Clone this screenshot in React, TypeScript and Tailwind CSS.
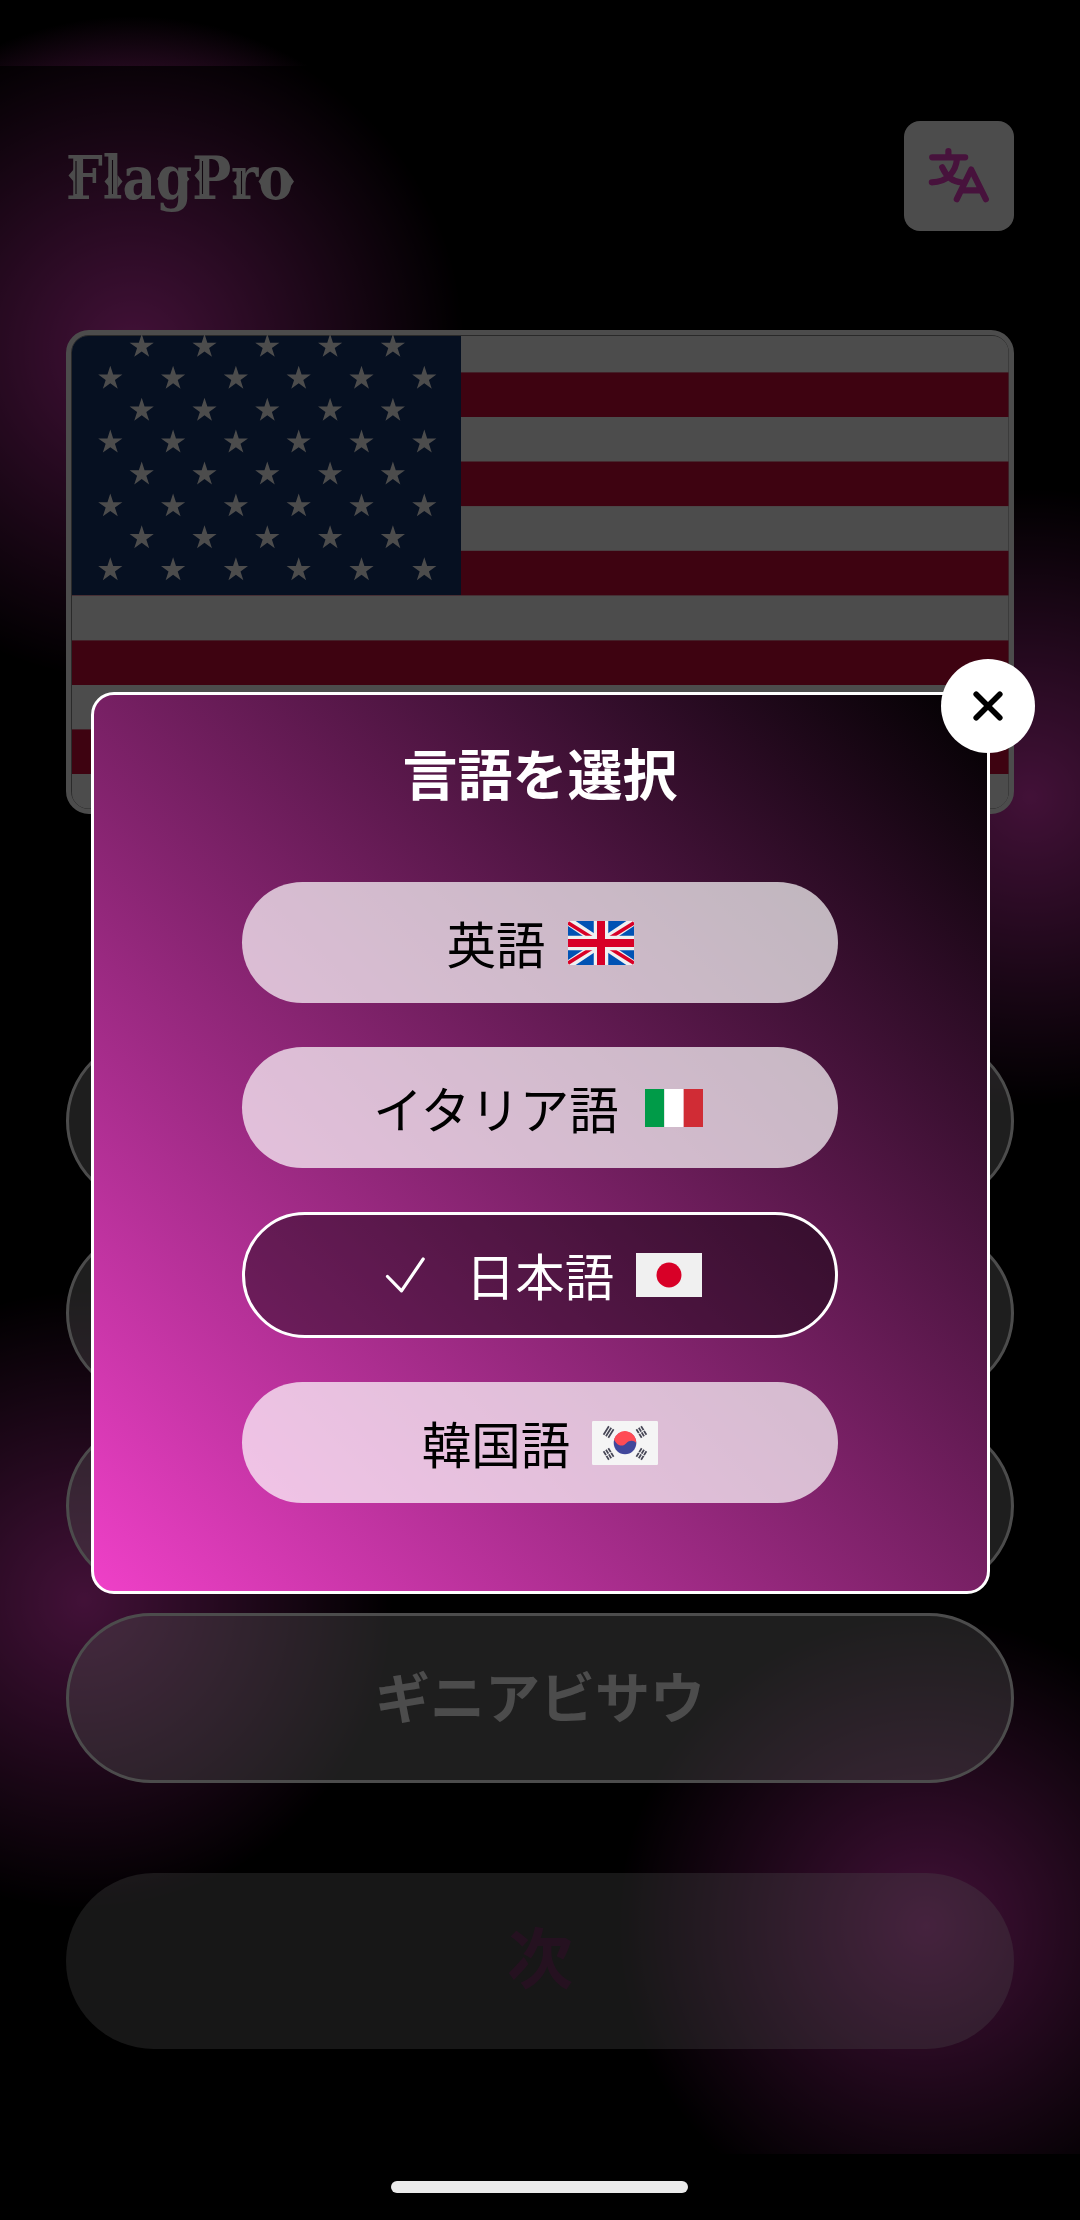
import React from "react";

const jp = "font-['Noto_Sans_CJK_JP',sans-serif]";

function starPoints(cx: number, cy: number, r: number) {
  return Array.from({ length: 10 }, (_, i) => {
    const a = -Math.PI / 2 + (i * Math.PI) / 5;
    const d = i % 2 ? r * 0.382 : r;
    return `${(cx + d * Math.cos(a)).toFixed(2)},${(cy + d * Math.sin(a)).toFixed(2)}`;
  }).join(" ");
}

function UsaFlag() {
  const stars: string[] = [];
  for (let row = 0; row < 8; row++) {
    const inset = row % 2 === 0;
    for (let i = 0; i < (inset ? 5 : 6); i++) {
      stars.push(starPoints((inset ? 141.7 : 110.3) + i * 62.8, 346.6 + row * 31.9, 12.7));
    }
  }
  return (
    <svg viewBox="71 335 938 474" className="block h-full w-full">
      <rect x="71" y="335" width="938" height="474" fill="#8c8c8c" />
      <rect x="72" y="336" width="936.5" height="472.5" rx="16" fill="#fff" />
      {[372.4, 461.5, 550.8, 640.4, 729.4].map((y) => (
        <rect key={y} x="72" y={y} width="936.5" height="44.6" fill="#cf0d3a" />
      ))}
      <path d="M461 336H88a16 16 0 0 0-16 16v243h389z" fill="#16366f" />
      {stars.map((p) => (
        <polygon key={p} points={p} fill="#fff" />
      ))}
    </svg>
  );
}

/* Small western-style spurs and engraved lines laid over the wordmark. */
function LogoOrnaments() {
  return (
    <svg viewBox="66 121 230 110" className="pointer-events-none absolute top-0 left-0 h-[110px] w-[230px]">
      <path
        d="M74 169l-5.500 6.500 5.500 6.500zM110 175l-5.500 6.500 5.500 6.500zM117.500 175l5 6.500-5 6.500zM200 169l-5.500 6.500 5.500 6.500zM239 175l-5.500 6.500 5.500 6.500zM263 175l-4.500 6.500 4.500 6.500zM289.500 175l4.500 6.500-4.500 6.500zM161 174l-4 5 4 5zM185 174l4.500 5-4.500 5z"
        fill="#fff"
      />
      <path d="M76 161v33M112.500 160v34M202.500 161v33M241.500 171v23" stroke="#3a1a34" strokeWidth="1.100" />
    </svg>
  );
}

function TranslateIcon() {
  return (
    <svg
      viewBox="904 121 110 110"
      className="h-[110px] w-[110px]"
      fill="none"
      stroke="#ee3ec8"
      strokeWidth="6.2"
      strokeLinecap="round"
      strokeLinejoin="round"
    >
      <path d="M932.2 157.3h33M948.4 151.2v6M957 159c-1.200 12-9 23-25.200 23.300M942.200 167.300c3.500 8 10 14.500 19.500 15.200" />
      <path d="M956.800 199.200L971.200 169.500l14.600 29.700M962 190.300h19" />
    </svg>
  );
}

function UkFlag() {
  return (
    <svg viewBox="0 0 66 44" className="h-[44px] w-[66px]">
      <rect width="66" height="44" fill="#0052b4" />
      <path d="M0 0L66 44M66 0L0 44" stroke="#f0f0f0" strokeWidth="8.500" />
      <path d="M0 1.800L26 18M66 1.800L40 18M0 42.200L26 26M66 42.200L40 26" stroke="#d80027" strokeWidth="3.600" />
      <path d="M33 0v44M0 22h66" stroke="#f0f0f0" strokeWidth="14.500" />
      <path d="M33 0v44M0 22h66" stroke="#d80027" strokeWidth="8" />
    </svg>
  );
}

function ItalyFlag() {
  return (
    <svg viewBox="0 0 66 44" className="h-[44px] w-[66px]">
      <path d="M4 3h19.300v38H4z" fill="#009b48" />
      <path d="M23.300 3h19.400v38H23.300z" fill="#fff" />
      <path d="M42.700 3H62v38H42.700z" fill="#d02c35" />
    </svg>
  );
}

function JapanFlag() {
  return (
    <svg viewBox="0 0 66 44" className="h-[44px] w-[66px]">
      <rect width="66" height="44" fill="#f0f0f0" />
      <circle cx="33" cy="22" r="12.500" fill="#d80027" />
    </svg>
  );
}

function KoreaFlag() {
  const trigram = (x: number, y: number, angle: number, broken: boolean) => (
    <g key={`${x}-${y}`} transform={`translate(${x} ${y}) rotate(${angle})`}>
      <path d="M-5 -2.800h10M-5 0h10M-5 2.800h10" stroke="#464655" strokeWidth="1.700" />
      {broken && <path d="M0 -4v8" stroke="#f5f5f5" strokeWidth="0.900" />}
    </g>
  );
  return (
    <svg viewBox="0 0 66 44" className="h-[44px] w-[66px]">
      <rect width="66" height="44" rx="1.200" fill="#f5f5f5" />
      <circle cx="33" cy="22" r="11.300" fill="#41479b" />
      <path d="M22 18.600A11.300 11.300 0 0 1 44.200 22.500C43.500 19.500 37.500 18.500 34.500 22S26 26.500 22 18.600z" fill="#ff4b55" />
      {trigram(16.6, 11, -58, false)}
      {trigram(49.4, 11, 58, true)}
      {trigram(16.6, 33, 58, true)}
      {trigram(49.4, 33, -58, true)}
    </svg>
  );
}

function CheckIcon() {
  return (
    <svg viewBox="0 0 66 66" className="h-[66px] w-[66px]" fill="none" stroke="#fff" strokeWidth="3.200" strokeLinecap="round" strokeLinejoin="round">
      <path d="M9.500 34.500l14 14.400L45.200 17" />
    </svg>
  );
}

const languages = [
  { label: "英語", Flag: UkFlag },
  { label: "イタリア語", Flag: ItalyFlag },
  { label: "日本語", Flag: JapanFlag, selected: true },
  { label: "韓国語", Flag: KoreaFlag },
];

function LanguageDialog() {
  return (
    <div className="relative flex h-[902px] w-[899px] flex-col items-center rounded-[23px] border-[3px] border-white bg-[linear-gradient(45deg,#ef40c8,#000000)] pt-[36px]">
      <h2 className="text-[55px] leading-[80px] font-bold text-white">言語を選択</h2>
      <div className="mt-[71px] flex flex-col gap-[44px]">
        {languages.map(({ label, Flag, selected }) => (
          <button
            key={label}
            className={
              selected
                ? "flex h-[126px] w-[596px] items-center justify-center gap-[22px] rounded-full border-[3px] border-white bg-black/40 text-[49.500px] text-white"
                : "flex h-[121px] w-[596px] items-center justify-center gap-[22px] rounded-full bg-white/70 text-[49.500px] text-black"
            }
          >
            {selected && <CheckIcon />}
            <span className="leading-[72px]">{label}</span>
            <Flag />
          </button>
        ))}
      </div>
      <button aria-label="close" className="absolute -top-[36px] -right-[48px] flex h-[94px] w-[94px] items-center justify-center rounded-full bg-white">
        <svg viewBox="0 0 30 30" className="h-[30px] w-[30px]" stroke="#000" strokeWidth="5.600" strokeLinecap="round">
          <path d="M3.200 3.200l23.600 23.600M26.800 3.200L3.200 26.800" />
        </svg>
      </button>
    </div>
  );
}

const answers = ["", "", "", "ギニアビサウ"];

export default function App() {
  return (
    <div className={`relative h-[2220px] w-[1080px] overflow-hidden bg-black ${jp}`}>
      <div className="absolute inset-x-0 top-0 h-[2154px] bg-[radial-gradient(335px_334px_at_133px_350px,#de3abb,transparent),radial-gradient(312px_312px_at_1030px_797px,#de3abb,transparent),radial-gradient(312px_312px_at_84px_1600px,#de3abb,transparent),radial-gradient(312px_312px_at_926px_1926px,#de3abb,transparent)]" />

      <div className="relative flex flex-col px-[66px] pt-[121px]">
        <header className="flex h-[110px] items-center justify-between">
          <div className="relative flex h-[110px] items-center">
            <h1 className="origin-left scale-x-[0.863] pt-[3px] font-['DejaVu_Serif',serif] text-[60px] leading-[70px] font-bold text-white">FlagPro</h1>
            <LogoOrnaments />
          </div>
          <button aria-label="language" className="h-[110px] w-[110px] rounded-[16px] bg-white">
            <TranslateIcon />
          </button>
        </header>

        <div className="mt-[99px] h-[484px] overflow-hidden rounded-[23px] border-[5px] border-white bg-white">
          <UsaFlag />
        </div>

        <div className="mt-[222px] flex flex-col gap-[22.300px]">
          {answers.map((a, i) => (
            <button key={i} className="flex h-[170px] items-center justify-center rounded-full border-[3px] border-white bg-white/40 pb-[8px] text-[55px] leading-[80px] font-bold text-white">
              {a}
            </button>
          ))}
        </div>

        <button className="mt-[90px] flex h-[176px] items-center justify-center rounded-full bg-white/30 pb-[13px] text-[66px] leading-[96px] font-bold text-[#7d3a6c]">
          次
        </button>
      </div>

      <div className="absolute inset-x-0 top-[66px] h-[2088px] bg-black/70" />
      <div className="absolute inset-x-0 top-[66px] flex h-[2154px] items-center justify-center">
        <LanguageDialog />
      </div>
      <div className="absolute top-[2181px] left-[391px] h-[12px] w-[297px] rounded-full bg-[#eaeaea]" />
    </div>
  );
}
